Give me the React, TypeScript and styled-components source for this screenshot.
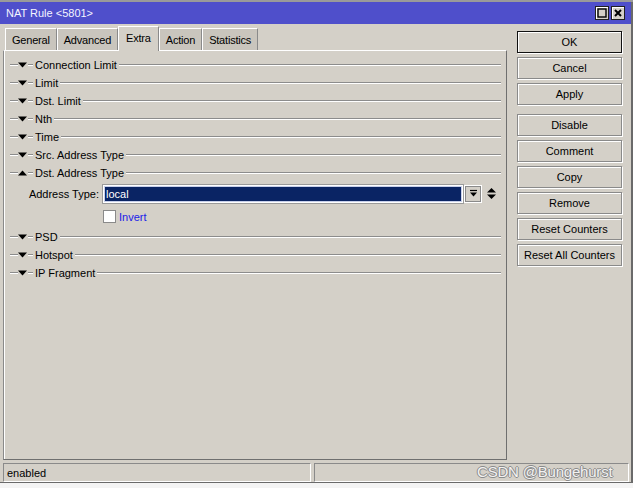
import styled, {createGlobalStyle} from 'styled-components';

const GlobalStyle = createGlobalStyle`
	html, body {
		margin: 0;
		padding: 0;
		background: #ffffff;
	}
	body {
		font-family: 'Liberation Sans', Arial, sans-serif;
		font-size: 11px;
		color: #000;
	}
`;

const Screen = styled.div`
	position: relative;
	display: flex;
	flex-direction: column;
	width: 633px;
	height: 488px;
	overflow: hidden;
	background: #ffffff;
`;
const BackStrip = styled.div`
	height: 2px;
	background: #9a9a9a;
`;
const Window = styled.div`
	display: flex;
	flex-direction: column;
	height: 481px;
	background: #d4d0c8;
	border-right: 2px solid #6a6a6a;
	border-bottom: 1px solid #6a6a6a;
	box-sizing: border-box;
`;
const TitleBar = styled.div`
	display: flex;
	align-items: center;
	height: 22px;
	padding: 0 6px 0 6px;
	background: #4f4fcb;
	color: #f4f4ff;
	font-size: 11px;
`;
const TitleText = styled.div`
	flex: 1;
`;
const TitleBtn = styled.div`
	display: flex;
	align-items: center;
	justify-content: center;
	width: 14px;
	height: 14px;
	margin-left: 2px;
	box-sizing: border-box;
	background: #d4d0c8;
	border: 1px solid #202020;
	box-shadow: inset 1px 1px #ffffff;
`;
const Body = styled.div`
	display: flex;
	height: 438px;
`;
const LeftCol = styled.div`
	display: flex;
	flex-direction: column;
	width: 504px;
	margin-left: 3px;
`;
const TabStrip = styled.div`
	display: flex;
	align-items: flex-end;
	height: 27px;
	padding-left: 2px;
	position: relative;
	z-index: 1;
`;
const Tab = styled.div<{$active?: boolean}>`
	display: flex;
	align-items: center;
	box-sizing: border-box;
	height: ${(p) => (p.$active ? '25px' : '22px')};
	margin-bottom: ${(p) => (p.$active ? '0' : '1px')};
	padding: ${(p) => (p.$active ? '0 7px 3px' : '0 6px')};
	background: ${(p) => (p.$active ? '#d4d0c8' : '#c9c5bd')};
	border-top: 1px solid #ffffff;
	border-left: 1px solid #ffffff;
	border-right: 1px solid #8a8a8a;
	letter-spacing: -0.2px;
`;
const Panel = styled.div`
	display: flex;
	flex-direction: column;
	height: 410px;
	margin-top: -1px;
	padding: 5px 5px 0 6px;
	box-sizing: border-box;
	border-top: 1px solid #ffffff;
	border-left: 1px solid #8a8a8a;
	border-right: 1px solid #6f6f6f;
	border-bottom: 1px solid #6f6f6f;
	box-shadow: inset 1px 0 #ffffff;
`;
const SectionRow = styled.div`
	display: flex;
	align-items: center;
	height: 18px;
`;
const Etch = styled.div<{$w?: number}>`
	height: 0;
	border-top: 1px solid #8c8c8c;
	border-bottom: 1px solid #ffffff;
	${(p) => (p.$w ? `width: ${p.$w}px;` : 'flex: 1;')}
`;
const Arrow = styled.svg`
	display: block;
	width: 9px;
	height: 6px;
	margin: 0 1px 0 0;
`;
const SectionLabel = styled.span`
	padding: 0 2px 0 2px;
`;
const FieldRow = styled.div`
	display: flex;
	align-items: center;
	height: 19px;
	margin-top: 2px;
`;
const FieldLabel = styled.div`
	width: 89px;
	margin-right: 4px;
	text-align: right;
`;
const ComboInput = styled.div`
	display: flex;
	align-items: center;
	width: 360px;
	height: 18px;
	box-sizing: border-box;
	padding-left: 2px;
	border: 1px solid #ffffff;
	outline: 1px solid #9a9a9a;
	background: #0a2464;
	box-shadow: inset 0 0 0 1px #c8d0ea;
	color: #ffffff;
`;
const ComboBtn = styled.div`
	display: flex;
	align-items: center;
	justify-content: center;
	width: 18px;
	height: 18px;
	margin-left: 1px;
	box-sizing: border-box;
	border: 1px solid #ffffff;
	box-shadow: inset 0 0 0 1px #8a8a8a;
`;
const UpDown = styled.svg`
	display: block;
	width: 9px;
	height: 11px;
	margin-left: 5px;
`;
const CheckRow = styled.div`
	display: flex;
	align-items: center;
	height: 13px;
	margin: 7px 0 5px 93px;
`;
const CheckBox = styled.div`
	width: 13px;
	height: 13px;
	box-sizing: border-box;
	background: #ffffff;
	border: 1px solid #8a8a8a;
`;
const CheckLabel = styled.span`
	margin-left: 3px;
	color: #2020e8;
`;
const ButtonCol = styled.div`
	display: flex;
	flex-direction: column;
	width: 105px;
	margin-left: 10px;
	padding-top: 7px;
`;
const Button = styled.div<{$default?: boolean; $gap?: number}>`
	display: flex;
	align-items: center;
	justify-content: center;
	height: 22px;
	margin-top: ${(p) => p.$gap ?? 4}px;
	box-sizing: border-box;
	border: 1px solid ${(p) => (p.$default ? '#111111' : '#8a8a8a')};
	box-shadow: inset 1px 1px #ffffff, 1px 1px #ffffff;
	background: #d4d0c8;
	white-space: nowrap;
`;
const StatusBar = styled.div`
	display: flex;
	gap: 3px;
	height: 20px;
	padding: 1px 0 0 3px;
	box-sizing: border-box;
`;
const StatusCell = styled.div<{$w: number}>`
	display: flex;
	align-items: center;
	width: ${(p) => p.$w}px;
	height: 19px;
	padding-left: 3px;
	box-sizing: border-box;
	border-top: 1px solid #8a8a8a;
	border-left: 1px solid #8a8a8a;
	border-right: 1px solid #ffffff;
	border-bottom: 1px solid #ffffff;
`;
const BottomStrip = styled.div`
	flex: 1;
	background: #f4f4f4;
`;
const Watermark = styled.div`
	position: absolute;
	left: 477px;
	top: 463px;
	font-family: 'Liberation Sans', Arial, sans-serif;
	font-size: 15px;
	color: #f2f2f2;
	text-shadow: 1px 0 #8a8a8a, -1px 0 #8a8a8a, 0 1px #8a8a8a, 0 -1px #8a8a8a;
	letter-spacing: -0.2px;
`;

const DownTri = () => (
	<Arrow viewBox="0 0 9 6">
		<path d="M0 0.5H9L4.5 5.5Z" fill="#000" />
	</Arrow>
);
const UpTri = () => (
	<Arrow viewBox="0 0 9 6">
		<path d="M0 5.5H9L4.5 0.5Z" fill="#000" />
	</Arrow>
);

function Section({label, open}: {label: string; open?: boolean}) {
	return (
		<SectionRow>
			<Etch $w={8} />
			{open ? <UpTri /> : <DownTri />}
			<Etch $w={5} />
			<SectionLabel>{label}</SectionLabel>
			<Etch />
		</SectionRow>
	);
}

const before = [
	'Connection Limit',
	'Limit',
	'Dst. Limit',
	'Nth',
	'Time',
	'Src. Address Type',
];
const after = ['PSD', 'Hotspot', 'IP Fragment'];
const tabs = ['General', 'Advanced', 'Extra', 'Action', 'Statistics'];
const buttons: {label: string; gap?: number; def?: boolean}[] = [
	{label: 'OK', gap: 0, def: true},
	{label: 'Cancel'},
	{label: 'Apply'},
	{label: 'Disable', gap: 9},
	{label: 'Comment'},
	{label: 'Copy'},
	{label: 'Remove'},
	{label: 'Reset Counters'},
	{label: 'Reset All Counters'},
];

export default function App() {
	return (
		<Screen>
			<GlobalStyle />
			<BackStrip />
			<Window>
				<TitleBar>
					<TitleText>NAT Rule &lt;5801&gt;</TitleText>
					<TitleBtn>
						<svg width="10" height="10" viewBox="0 0 10 10">
							<rect x="1" y="1" width="8" height="8" fill="none" stroke="#000" strokeWidth="1.4" />
						</svg>
					</TitleBtn>
					<TitleBtn>
						<svg width="10" height="10" viewBox="0 0 10 10">
							<path d="M2 2L8 8M8 2L2 8" stroke="#000" strokeWidth="2" />
						</svg>
					</TitleBtn>
				</TitleBar>
				<Body>
					<LeftCol>
						<TabStrip>
							{tabs.map((t) => (
								<Tab key={t} $active={t === 'Extra'}>
									{t}
								</Tab>
							))}
						</TabStrip>
						<Panel>
							{before.map((s) => (
								<Section key={s} label={s} />
							))}
							<Section label="Dst. Address Type" open />
							<FieldRow>
								<FieldLabel>Address Type:</FieldLabel>
								<ComboInput>local</ComboInput>
								<ComboBtn>
									<svg width="9" height="9" viewBox="0 0 9 9">
										<path d="M1 1.5H8" stroke="#000" strokeWidth="1.2" />
										<path d="M1 3.5H8L4.5 7.5Z" fill="#000" />
									</svg>
								</ComboBtn>
								<UpDown viewBox="0 0 9 11">
									<path d="M0 4.5H9L4.5 0Z" fill="#000" />
									<path d="M0 6.5H9L4.5 11Z" fill="#000" />
								</UpDown>
							</FieldRow>
							<CheckRow>
								<CheckBox />
								<CheckLabel>Invert</CheckLabel>
							</CheckRow>
							{after.map((s) => (
								<Section key={s} label={s} />
							))}
						</Panel>
					</LeftCol>
					<ButtonCol>
						{buttons.map((b) => (
							<Button key={b.label} $default={b.def} $gap={b.gap}>
								{b.label}
							</Button>
						))}
					</ButtonCol>
				</Body>
				<StatusBar>
					<StatusCell $w={308}>enabled</StatusCell>
					<StatusCell $w={315} />
				</StatusBar>
			</Window>
			<BottomStrip />
			<Watermark>CSDN @Bungehurst</Watermark>
		</Screen>
	);
}
